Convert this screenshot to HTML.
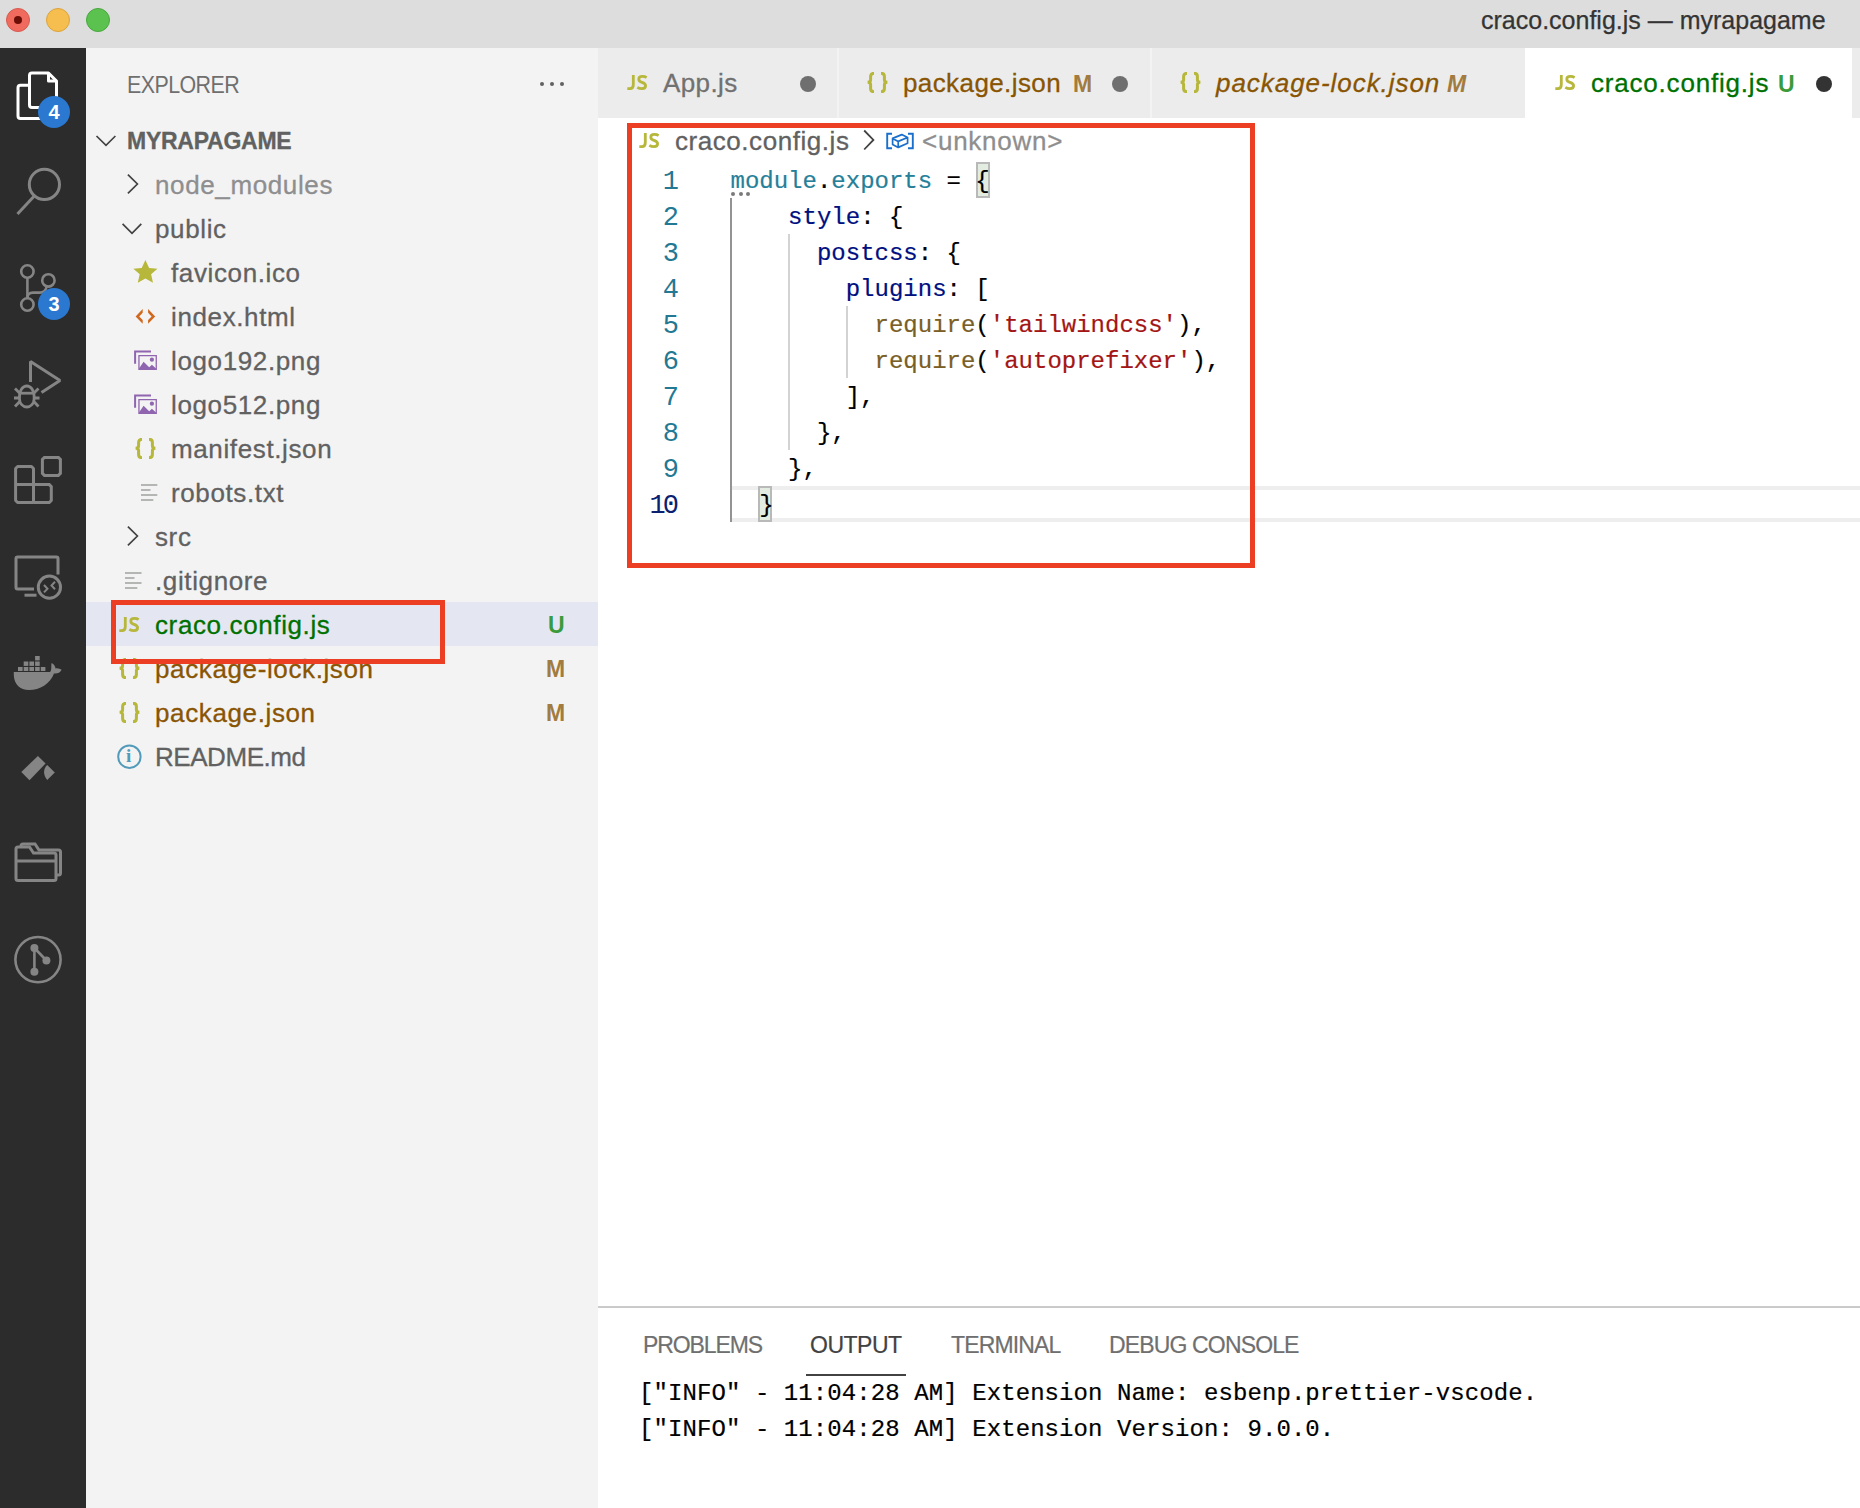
<!DOCTYPE html>
<html><head><meta charset="utf-8">
<style>
*{margin:0;padding:0;box-sizing:border-box}
html,body{width:1860px;height:1508px;overflow:hidden;background:#fff}
body{position:relative;font-family:"Liberation Sans",sans-serif}
.a{position:absolute}
.t{position:absolute;white-space:pre}
.mono{font-family:"Liberation Mono",monospace}
#title{left:0;top:0;width:1860px;height:48px;background:#dddddd}
#act{left:0;top:48px;width:86px;height:1460px;background:#2c2c2c}
#side{left:86px;top:48px;width:512px;height:1460px;background:#f3f3f3}
#tabs{left:598px;top:48px;width:1262px;height:70px;background:#ececec}
.light{border-radius:50%;width:24px;height:24px}
.badge{position:absolute;width:32px;height:32px;border-radius:50%;background:#2a78d0;color:#fff;font-weight:700;font-size:20px;line-height:32px;text-align:center}
.row{position:absolute;left:86px;width:512px;height:44px}
.st{font-size:26px;line-height:44px;color:#616161;letter-spacing:0.62px;-webkit-text-stroke:0.3px currentColor}
.tab{position:absolute;top:48px;height:70px}
.tt{font-size:26px;line-height:70px;letter-spacing:0.4px;-webkit-text-stroke:0.3px currentColor}
.dot{position:absolute;width:16px;height:16px;border-radius:50%}
.code{font-family:"Liberation Mono",monospace;font-size:24px;line-height:36px;color:#000;-webkit-text-stroke:0.2px currentColor}
.ln{font-family:"Liberation Mono",monospace;font-size:24px;line-height:36px;color:#237893;text-align:right;width:60px}
.ptab{font-size:23px;line-height:32px;color:#6f6f6f;-webkit-text-stroke:0.2px currentColor}
.red{position:absolute;border:5px solid #eb3e22}
</style></head><body>
<svg width="0" height="0" style="position:absolute"><defs>
<symbol id="js" viewBox="0 0 21 15"><g fill="none" stroke="#b7b73b" stroke-width="2.8"><path d="M6.3 0 V9.8 Q6.3 13.6 3 13.6 H0.3"/><path d="M19.6 2.6 Q18 1.4 15.3 1.4 Q11.8 1.4 11.8 4.2 Q11.8 6.3 15 7.3 Q18.6 8.4 18.6 10.8 Q18.6 13.6 15 13.6 Q12.3 13.6 10.3 12.3"/></g></symbol>
<symbol id="br" viewBox="0 0 21 21"><g fill="none" stroke="#b7b73b" stroke-width="3"><path d="M7 1.3 Q3.6 1.3 3.6 4.5 V7.8 Q3.6 10.3 0.6 10.3 Q3.6 10.3 3.6 12.8 V16.5 Q3.6 19.7 7 19.7"/><path d="M14 1.3 Q17.4 1.3 17.4 4.5 V7.8 Q17.4 10.3 20.4 10.3 Q17.4 10.3 17.4 12.8 V16.5 Q17.4 19.7 14 19.7"/></g></symbol>
</defs></svg>
<!-- title bar -->
<div class="a" id="title"></div>
<div class="a light" style="left:6px;top:8px;background:#f06a5e;border:1px solid #d85a4f"></div>
<div class="a" style="left:14px;top:16px;width:8px;height:8px;border-radius:50%;background:#6b0e07"></div>
<div class="a light" style="left:46px;top:8px;background:#f6bd4f;border:1px solid #dca43c"></div>
<div class="a light" style="left:86px;top:8px;background:#5cc24f;border:1px solid #48a83d"></div>
<div class="t" style="left:1481px;top:0px;font-size:25px;line-height:40px;color:#343434;-webkit-text-stroke:0.25px currentColor">craco.config.js — myrapagame</div>

<!-- activity bar -->
<div class="a" id="act"></div>
<svg class="a" style="left:0;top:0" width="86" height="1508" viewBox="0 0 86 1508" fill="none">
 <!-- explorer (white) -->
 <g stroke="#ffffff" stroke-width="3" stroke-linejoin="round">
  <path d="M29.5 105 V75.5 a2.5 2.5 0 0 1 2.5 -2.5 H48.5 L56.5 81 V100"/>
  <path d="M48.5 73 V81 H56.5"/>
  <path d="M29.5 105 a2.5 2.5 0 0 0 2.5 2.5 H44"/>
  <path d="M29.5 85.2 H20.5 a2.5 2.5 0 0 0 -2.5 2.5 V116 a2.5 2.5 0 0 0 2.5 2.5 H44"/>
 </g>
 <g stroke="#858585" stroke-width="3">
  <!-- search -->
  <circle cx="44.4" cy="184.4" r="15.1"/>
  <path d="M33.8 196.4 L17.5 214"/>
  <!-- source control -->
  <g stroke-width="2.6">
   <circle cx="27.4" cy="271.5" r="6.2"/>
   <circle cx="48.4" cy="280.4" r="6.2"/>
   <circle cx="27.4" cy="304.5" r="6.2"/>
   <path d="M27.4 277.7 V298.3"/>
   <path d="M27.4 298 Q27.4 292.6 33 292.6 H40 Q45 292.6 46.6 287"/>
  </g>
  <!-- run & debug -->
  <path d="M30.5 382 V361.5 L60 380.5 L41.5 392.5" stroke-linejoin="bevel"/>
  <g stroke-width="2.8">
   <path d="M19.5 396 a7.3 10 0 0 1 14.6 0 V399 a7.3 8 0 0 1 -14.6 0 Z"/>
   <path d="M19.5 393.2 H34"/>
   <path d="M15 388.5 L19.5 393 M38.5 388.5 L34 393 M14 398 H19.5 M34 398 H39.5 M15 406.5 L19.8 401.5 M38.5 406.5 L33.8 401.5"/>
  </g>
  <!-- extensions -->
  <path d="M17.6 466.5 H31.5 L33.5 468.5 V502.5 H17.6 L15.6 500.5 V468.5 Z" stroke-linejoin="bevel"/>
  <path d="M15.6 484.6 H49.3 L51.3 486.6 V500.5 L49.3 502.5 H33.5"/>
  <path d="M44.4 457.4 H58.4 L60.4 459.4 V473.4 L58.4 475.4 H44.4 L42.4 473.4 V459.4 Z"/>
  <!-- remote explorer -->
  <path d="M34 589 H17.5 a1.5 1.5 0 0 1 -1.5 -1.5 V558.5 a1.5 1.5 0 0 1 1.5 -1.5 H56.5 a1.5 1.5 0 0 1 1.5 1.5 V574.5"/>
  <path d="M24.5 595.2 H36.5"/>
  <circle cx="49.4" cy="587.2" r="11.1"/>
  <path d="M44 585 L47.5 588.7 L44 592.4 M55 581.8 L51.5 585.5 L55 589.2" stroke-width="2"/>
  <!-- folder -->
  <path d="M16 849 a2 2 0 0 1 2 -2 H29.5 L33.5 853 H54 a2 2 0 0 1 2 2 V878.5 a2 2 0 0 1 -2 2 H18 a2 2 0 0 1 -2 -2 Z" stroke-width="3"/>
  <path d="M16 861 H56" stroke-width="3"/>
  <path d="M21 847 V846 a2 2 0 0 1 2 -2 H35 L39 850 H58.5 a2 2 0 0 1 2 2 V873 a2 2 0 0 1 -2 2 H56.5" stroke-width="3"/>
  <!-- git graph -->
  <circle cx="38" cy="959.6" r="22.6" stroke-width="2.6"/>
  <path d="M34.4 948 V971.7 M34.4 948 L46.4 960.5" stroke-width="2.6"/>
 </g>
 <g fill="#858585">
  <circle cx="34.4" cy="948" r="4"/><circle cx="46.4" cy="960.5" r="4"/><circle cx="34.4" cy="971.7" r="4"/>
  <!-- docker -->
  <rect x="18" y="667" width="4.6" height="4"/><rect x="23.7" y="667" width="4.6" height="4"/><rect x="29.4" y="667" width="4.6" height="4"/><rect x="35.1" y="667" width="4.6" height="4"/><rect x="40.8" y="667" width="4.6" height="4"/>
  <rect x="23.7" y="661.5" width="4.6" height="4.4"/><rect x="29.4" y="661.5" width="4.6" height="4.4"/><rect x="35.1" y="661.5" width="4.6" height="4.4"/>
  <rect x="35.1" y="656" width="4.6" height="4.4"/>
  <path d="M13.8 672 H50 C52 670 51 666 51.5 663 C54 664 55.5 666.5 55.5 668.5 C58 668 60 669 61.6 669.8 C60 673 57 674 54 673.5 C50 684 40 690 29 690 C20 690 14 684 13.8 675 Z"/>
  <!-- azure -->
  <path d="M21.3 772 L37.9 755.9 L45.6 763.5 L29.5 780.2 Z"/>
  <path d="M47.2 765 L54.8 772.6 L47.2 780 C43 775 43 769 47.2 765 Z"/>
 </g>
</svg>

<div class="badge" style="left:38px;top:96px">4</div>
<div class="badge" style="left:38px;top:288px">3</div>

<!-- sidebar -->
<div class="a" id="side"></div>
<!-- sidebar content -->
<div class="t" style="left:127px;top:65px;font-size:23px;line-height:40px;color:#6f6f6f;letter-spacing:-0.6px;transform:scaleX(0.93);transform-origin:0 0">EXPLORER</div>
<div class="a" style="left:540px;top:82px;width:4px;height:4px;border-radius:50%;background:#616161"></div>
<div class="a" style="left:550px;top:82px;width:4px;height:4px;border-radius:50%;background:#616161"></div>
<div class="a" style="left:560px;top:82px;width:4px;height:4px;border-radius:50%;background:#616161"></div>
<!-- selection row -->
<div class="a" style="left:86px;top:602px;width:512px;height:44px;background:#e4e6f1"></div>
<svg class="a" style="left:0;top:0" width="600" height="800" viewBox="0 0 600 800" fill="none">
 <g stroke="#424242" stroke-width="1.7" stroke-linecap="butt">
  <path d="M96.5 136 L106 145.3 L115.4 136"/>
  <path d="M127.9 174.7 L137.4 184 L127.9 193.3"/>
  <path d="M122.6 223.9 L132 233.4 L141.3 223.9"/>
  <path d="M127.9 526.7 L137.4 536 L127.9 545.3"/>
 </g>
 <!-- favicon star -->
 <path fill="#b7b73b" d="M145.4 260 L149.1 267.9 L157.4 268.7 L151.1 274.3 L153 282.8 L145.4 278.4 L137.8 282.8 L139.7 274.3 L133.4 268.7 L141.7 267.9 Z"/>
 <!-- index.html <> -->
 <g fill="#d0691f">
  <path d="M142.7 309 V312.8 L139.2 316.4 L142.7 320 V323.8 L135.6 316.4 Z"/>
  <path d="M148.1 309 V312.8 L151.6 316.4 L148.1 320 V323.8 L155.2 316.4 Z"/>
 </g>
 <!-- image icons -->
 <g fill="#9065b0">
  <path d="M134.1 350.4 H151 V352.5 H136.1 V363.7 H134.1 Z"/>
  <path d="M138.3 354.9 H156.9 V370 H138.3 Z M139.6 356.2 V368.7 H155.6 V356.2 Z"/>
  <path d="M139 368.6 L143.6 361.8 L149.2 367.2 L151.9 364.7 L156 368.6 V370 H139 Z"/>
  <circle cx="151.9" cy="359.7" r="2.1"/>
  <path d="M134.1 394.4 H151 V396.5 H136.1 V407.7 H134.1 Z"/>
  <path d="M138.3 398.9 H156.9 V414 H138.3 Z M139.6 400.2 V412.7 H155.6 V400.2 Z"/>
  <path d="M139 412.6 L143.6 405.8 L149.2 411.2 L151.9 408.7 L156 412.6 V414 H139 Z"/>
  <circle cx="151.9" cy="403.7" r="2.1"/>
 </g>
 <!-- robots lines -->
 <g fill="#b3b6b3">
  <rect x="141" y="484" width="16.3" height="2"/>
  <rect x="141" y="489" width="9.5" height="2"/>
  <rect x="141" y="494" width="16.3" height="2"/>
  <rect x="141" y="499" width="12.3" height="2"/>
  <rect x="125" y="572" width="16.5" height="2"/>
  <rect x="125" y="577" width="9.5" height="2"/>
  <rect x="125" y="582" width="16.5" height="2"/>
  <rect x="125" y="587" width="12.3" height="2"/>
 </g>
 <!-- info icon -->
 <circle cx="129.4" cy="756.7" r="11.2" stroke="#519aba" stroke-width="2"/>
</svg>
<div class="t st" style="left:127px;top:119px;font-size:23px;font-weight:700;letter-spacing:-0.25px">MYRAPAGAME</div>
<div class="t st" style="left:155px;top:163px;color:#8e8e90">node_modules</div>
<div class="t st" style="left:155px;top:207px">public</div>
<div class="t st" style="left:171px;top:251px">favicon.ico</div>
<div class="t st" style="left:171px;top:295px">index.html</div>
<div class="t st" style="left:171px;top:339px">logo192.png</div>
<div class="t st" style="left:171px;top:383px">logo512.png</div>
<svg class="a" style="left:135px;top:438px" width="21" height="21"><use href="#br"/></svg>
<div class="t st" style="left:171px;top:427px">manifest.json</div>
<div class="t st" style="left:171px;top:471px">robots.txt</div>
<div class="t st" style="left:155px;top:515px">src</div>
<div class="t st" style="left:155px;top:559px">.gitignore</div>
<svg class="a" style="left:119px;top:617px" width="21" height="15"><use href="#js"/></svg>
<div class="t st" style="left:155px;top:603px;color:#007100">craco.config.js</div>
<div class="t st" style="left:548px;top:603px;color:#3b9b3b;font-size:23px;font-weight:700;letter-spacing:0;-webkit-text-stroke:0">U</div>
<svg class="a" style="left:119px;top:658px" width="21" height="21"><use href="#br"/></svg>
<div class="t st" style="left:155px;top:647px;color:#895503">package-lock.json</div>
<div class="t st" style="left:546px;top:647px;color:#a27b3e;font-size:23px;font-weight:700;letter-spacing:0;-webkit-text-stroke:0">M</div>
<svg class="a" style="left:119px;top:702px" width="21" height="21"><use href="#br"/></svg>
<div class="t st" style="left:155px;top:691px;color:#895503">package.json</div>
<div class="t st" style="left:546px;top:691px;color:#a27b3e;font-size:23px;font-weight:700;letter-spacing:0;-webkit-text-stroke:0">M</div>
<div class="t" style="left:126px;top:734px;font-family:'Liberation Serif',serif;font-size:19px;line-height:44px;color:#519aba;font-weight:700">i</div>
<div class="t st" style="left:155px;top:735px;letter-spacing:-0.45px">README.md</div>
<div class="red" style="left:111px;top:600px;width:334px;height:64px"></div>


<!-- tabs -->
<div class="a" id="tabs"></div>
<!-- tabs -->
<div class="a" style="left:837px;top:48px;width:2px;height:70px;background:#f3f3f3"></div>
<div class="a" style="left:1150px;top:48px;width:2px;height:70px;background:#f3f3f3"></div>
<div class="a" style="left:1525px;top:48px;width:327px;height:70px;background:#ffffff"></div>
<svg class="a" style="left:627px;top:75px" width="21" height="15"><use href="#js"/></svg>
<div class="t tt" style="left:663px;top:48px;color:#717171">App.js</div>
<div class="dot" style="left:800px;top:76px;background:#6f6f6f"></div>
<svg class="a" style="left:867px;top:72px" width="21" height="21"><use href="#br"/></svg>
<div class="t tt" style="left:903px;top:48px;color:#895503">package.json</div>
<div class="t tt" style="left:1073px;top:49px;color:#a27b3e;font-size:23px;font-weight:700;letter-spacing:0;-webkit-text-stroke:0">M</div>
<div class="dot" style="left:1112px;top:76px;background:#6f6f6f"></div>
<svg class="a" style="left:1180px;top:72px" width="21" height="21"><use href="#br"/></svg>
<div class="t tt" style="left:1216px;top:48px;color:#895503;font-style:italic;letter-spacing:0.95px">package-lock.json</div>
<div class="t tt" style="left:1447px;top:49px;color:#a27b3e;font-size:23px;font-weight:700;font-style:italic;letter-spacing:0;-webkit-text-stroke:0">M</div>
<svg class="a" style="left:1555px;top:75px" width="21" height="15"><use href="#js"/></svg>
<div class="t tt" style="left:1591px;top:48px;color:#007100;letter-spacing:0.8px">craco.config.js</div>
<div class="t tt" style="left:1778px;top:49px;color:#3b9b3b;font-size:23px;font-weight:700;letter-spacing:0;-webkit-text-stroke:0">U</div>
<div class="dot" style="left:1816px;top:76px;background:#333333"></div>

<!-- breadcrumbs -->
<svg class="a" style="left:639px;top:133px" width="21" height="15"><use href="#js"/></svg>
<div class="t" style="left:675px;top:121px;font-size:26px;line-height:40px;color:#616161;letter-spacing:0.55px;-webkit-text-stroke:0.3px currentColor">craco.config.js</div>
<svg class="a" style="left:855px;top:125px" width="70" height="32" fill="none">
 <path d="M9.2 5.5 L18.4 14.9 L9.2 24.5" stroke="#424242" stroke-width="1.8"/>
 <path d="M37 8.7 H32.2 V23.3 H37 M53 8.7 H57.8 V23.3 H53" stroke="#1a6fcc" stroke-width="1.9"/>
 <path d="M37.6 13.4 L46.8 9.6 L52.6 12.5 V18.2 L43.2 22.4 L37.6 19.4 Z M37.6 13.4 L43.2 16.4 L52.6 12.5 M43.2 16.4 V22.4" stroke="#1a6fcc" stroke-width="1.7" stroke-linejoin="round"/>
</svg>
<div class="t" style="left:922px;top:121px;font-size:26px;line-height:40px;color:#8e8e8e;letter-spacing:0.75px;-webkit-text-stroke:0.3px currentColor">&lt;unknown&gt;</div>

<!-- current line highlight -->
<div class="a" style="left:732px;top:486px;width:1128px;height:36px;border-top:4px solid #eeeeee;border-bottom:4px solid #eeeeee"></div>
<!-- bracket match boxes -->
<div class="a" style="left:976px;top:162px;width:14px;height:36px;background:#e3ece0;border:2px solid #b9b9b9"></div>
<div class="a" style="left:758px;top:486px;width:14px;height:36px;background:#e3ece0;border:2px solid #b9b9b9"></div>
<!-- indent guides -->
<div class="a" style="left:730px;top:198px;width:2px;height:324px;background:#939393"></div>
<div class="a" style="left:788px;top:234px;width:2px;height:216px;background:#d3d3d3"></div>
<div class="a" style="left:846px;top:306px;width:2px;height:72px;background:#d3d3d3"></div>
<!-- hint dots -->
<div class="a" style="left:731px;top:192px;width:4px;height:4px;border-radius:50%;background:#7a7a7a"></div>
<div class="a" style="left:738.5px;top:192px;width:4px;height:4px;border-radius:50%;background:#7a7a7a"></div>
<div class="a" style="left:746px;top:192px;width:4px;height:4px;border-radius:50%;background:#7a7a7a"></div>

<!-- line numbers -->
<div class="a ln" style="left:616px;top:164px;font-size:27px;letter-spacing:-3px">1<br>2<br>3<br>4<br>5<br>6<br>7<br>8<br>9<br><span style="color:#0b216f">10</span></div>
<!-- code -->
<div class="t code" style="left:730.5px;top:164px"><span style="color:#267f99">module</span>.<span style="color:#267f99">exports</span> = {
    <span style="color:#001080">style</span>: {
      <span style="color:#001080">postcss</span>: {
        <span style="color:#001080">plugins</span>: [
          <span style="color:#795e26">require</span>(<span style="color:#a31515">'tailwindcss'</span>),
          <span style="color:#795e26">require</span>(<span style="color:#a31515">'autoprefixer'</span>),
        ],
      },
    },
  }</div>
<div class="red" style="left:627px;top:123px;width:628px;height:445px"></div>

<!-- panel -->
<div class="a" style="left:598px;top:1306px;width:1262px;height:2px;background:#cacaca"></div>
<div class="t ptab" style="left:643px;top:1329px;letter-spacing:-1.1px">PROBLEMS</div>
<div class="t ptab" style="left:810px;top:1329px;color:#424242;letter-spacing:-0.5px">OUTPUT</div>
<div class="a" style="left:806px;top:1374px;width:100px;height:2px;background:#424242"></div>
<div class="t ptab" style="left:951px;top:1329px;letter-spacing:-0.85px">TERMINAL</div>
<div class="t ptab" style="left:1109px;top:1329px;letter-spacing:-0.85px">DEBUG CONSOLE</div>
<div class="t code" style="left:639px;top:1376px;letter-spacing:0.084px">["INFO" - 11:04:28 AM] Extension Name: esbenp.prettier-vscode.
["INFO" - 11:04:28 AM] Extension Version: 9.0.0.</div>


</body></html>
